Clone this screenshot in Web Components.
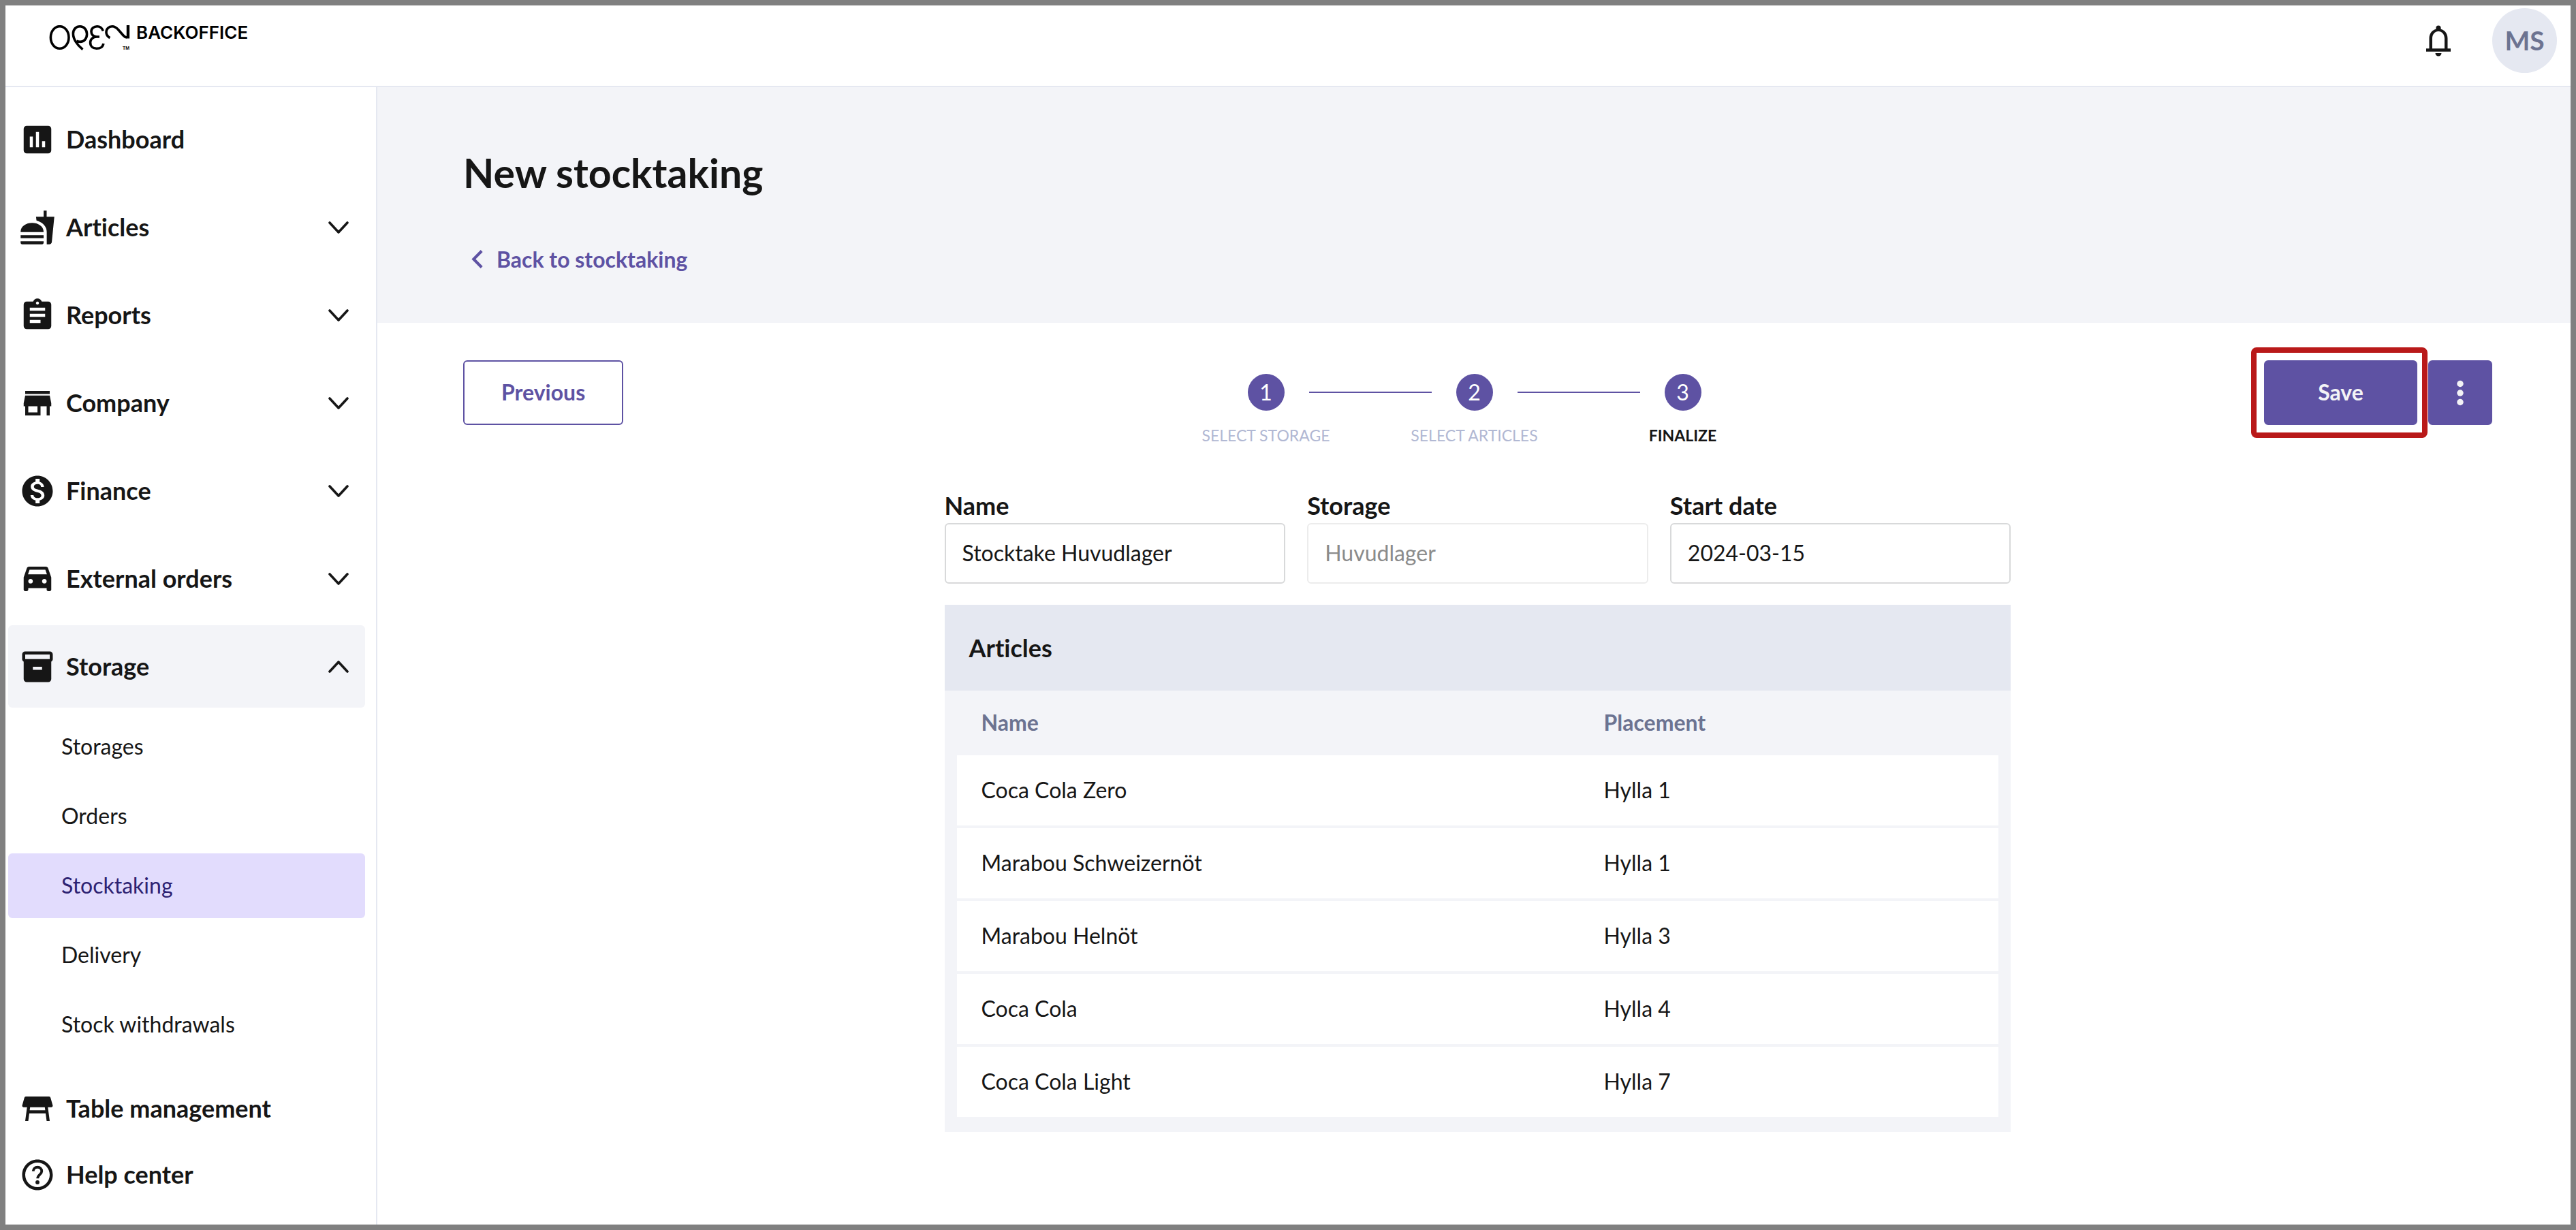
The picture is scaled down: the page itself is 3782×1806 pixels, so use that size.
<!DOCTYPE html>
<html lang="en">
<head>
<meta charset="utf-8">
<meta name="viewport" content="width=device-width, initial-scale=1">
<title>New stocktaking</title>
<style>
  :root {
    --ink: #161616;
    --primary: #5e52a3;
    --primary-dark: #2d2272;
    --primary-soft: #e2dcfd;
    --muted: #6c7391;
    --faint: #b1b8d3;
    --line: #e5e8f1;
    --surface: #f3f4f8;
    --radius: 6px;
  }
  * { box-sizing: border-box; }
  body {
    margin: 0;
    min-height: 100vh;
    display: flex;
    flex-direction: column;
    border: 8px solid #808080;
    background: #fff;
    color: var(--ink);
    font-family: Lato, "Open Sans", sans-serif;
    font-size: 32px;
    line-height: 40px;
    font-variant-ligatures: none;
  }
  .layout { flex: 1; display: flex; }
  main { flex: 1; min-width: 0; }
</style>
</head>
<body>
  <bo-header initials="MS">BACKOFFICE</bo-header>
  <div class="layout">
    <bo-sidebar>
      <bo-nav-item icon="dashboard">Dashboard</bo-nav-item>
      <bo-nav-item icon="articles" group>Articles</bo-nav-item>
      <bo-nav-item icon="reports" group>Reports</bo-nav-item>
      <bo-nav-item icon="company" group>Company</bo-nav-item>
      <bo-nav-item icon="finance" group>Finance</bo-nav-item>
      <bo-nav-item icon="external" group>External orders</bo-nav-item>
      <bo-nav-item icon="storage" group open>Storage</bo-nav-item>
      <bo-sub-item slot="sub">Storages</bo-sub-item>
      <bo-sub-item slot="sub">Orders</bo-sub-item>
      <bo-sub-item slot="sub" current>Stocktaking</bo-sub-item>
      <bo-sub-item slot="sub">Delivery</bo-sub-item>
      <bo-sub-item slot="sub">Stock withdrawals</bo-sub-item>
      <bo-nav-item slot="bottom" icon="table" compact>Table management</bo-nav-item>
      <bo-nav-item slot="bottom" icon="help" compact>Help center</bo-nav-item>
    </bo-sidebar>
    <main>
      <bo-page-title back="Back to stocktaking">New stocktaking</bo-page-title>
      <bo-toolbar>
        <bo-button slot="start" variant="outline">Previous</bo-button>
        <bo-stepper steps="Select storage,Select articles,Finalize" current="3"></bo-stepper>
        <bo-highlight slot="end"><bo-button>Save</bo-button></bo-highlight>
        <bo-button slot="end" variant="icon" label="More options"></bo-button>
      </bo-toolbar>
      <bo-stocktake-form>
        <bo-field label="Name" value="Stocktake Huvudlager"></bo-field>
        <bo-field label="Storage" value="Huvudlager" disabled></bo-field>
        <bo-field label="Start date" value="2024-03-15"></bo-field>
        <bo-article-table slot="table" heading="Articles"></bo-article-table>
      </bo-stocktake-form>
    </main>
  </div>

<script>
const ICONS = {
  dashboard: `<path fill-rule="evenodd" d="M5 3h14a2 2 0 0 1 2 2v14a2 2 0 0 1-2 2H5a2 2 0 0 1-2-2V5a2 2 0 0 1 2-2zM7 10v7h2v-7zM11 7v10h2V7zM15 13v4h2v-4z"/>`,
  articles: `<path d="M18.06 22.99h1.66c.84 0 1.53-.64 1.63-1.46L23 5.05h-5V1h-1.97v4.05h-4.97l.3 2.34c1.71.47 3.31 1.32 4.27 2.26 1.44 1.42 2.43 2.89 2.43 5.29v8.05zM1 21.99V21h15.03v.99c0 .55-.45 1-1.01 1H2.01c-.56 0-1.01-.45-1.01-1zm15.03-7c0-8-15.03-8-15.03 0h15.03zM1.02 17h15v2h-15z"/>`,
  reports: `<path d="M19 3h-4.18C14.4 1.84 13.3 1 12 1c-1.3 0-2.4.84-2.82 2H5c-1.1 0-2 .9-2 2v14c0 1.1.9 2 2 2h14c1.1 0 2-.9 2-2V5c0-1.1-.9-2-2-2zm-7 0c.55 0 1 .45 1 1s-.45 1-1 1-1-.45-1-1 .45-1 1-1zm2 14H7v-2h7v2zm3-4H7v-2h10v2zm0-4H7V7h10v2z"/>`,
  company: `<path d="M20 4H4v2h16V4zm1 10v-2l-1-5H4l-1 5v2h1v6h10v-6h4v6h2v-6h1zm-9 4H6v-4h6v4z"/>`,
  finance: `<path d="M12 2C6.48 2 2 6.48 2 12s4.48 10 10 10 10-4.48 10-10S17.52 2 12 2zm1.41 16.09V20h-2.67v-1.93c-1.71-.36-3.16-1.46-3.27-3.4h1.96c.1 1.05.82 1.87 2.65 1.87 1.96 0 2.4-.98 2.4-1.59 0-.83-.44-1.61-2.67-2.14-2.48-.6-4.18-1.62-4.18-3.67 0-1.72 1.39-2.84 3.11-3.21V4h2.67v1.95c1.86.45 2.79 1.86 2.85 3.39H14.3c-.05-1.11-.64-1.87-2.22-1.87-1.5 0-2.4.68-2.4 1.64 0 .84.65 1.39 2.67 1.91s4.18 1.39 4.18 3.91c-.01 1.83-1.38 2.83-3.12 3.16z"/>`,
  external: `<path d="M18.92 5.01C18.72 4.42 18.16 4 17.5 4h-11c-.66 0-1.21.42-1.42 1.01L3 11v8c0 .55.45 1 1 1h1c.55 0 1-.45 1-1v-1h12v1c0 .55.45 1 1 1h1c.55 0 1-.45 1-1v-8l-2.08-5.99zM7.5 15c-.83 0-1.5-.67-1.5-1.5S6.67 12 7.5 12s1.5.67 1.5 1.5S8.33 15 7.5 15zm9 0c-.83 0-1.5-.67-1.5-1.5s.67-1.5 1.5-1.5 1.5.67 1.5 1.5-.67 1.5-1.5 1.5zM5.81 9l1.04-3h10.29l1.04 3H5.81z"/>`,
  storage: `<path fill-rule="evenodd" d="M4 2h16a2 2 0 0 1 2 2v3.01c0 .72-.43 1.34-1 1.69V20a2 2 0 0 1-2 2H5a2 2 0 0 1-2-2V8.7c-.57-.35-1-.97-1-1.69V4a2 2 0 0 1 2-2zM4 4v3h16V4zM9 12v2h6v-2z"/>`,
  table: `<path d="M21.96 9.73l-1.43-5A1 1 0 0 0 19.57 4H4.43a1 1 0 0 0-.96.73l-1.43 5A1 1 0 0 0 3 11h2.2L4 20h2l.67-5h10.67l.66 5h2l-1.2-9H21a1 1 0 0 0 .96-1.27zM6.93 13l.27-2h9.6l.27 2z"/>`,
  help: `<path d="M12 2C6.48 2 2 6.48 2 12s4.48 10 10 10 10-4.48 10-10S17.52 2 12 2zm0 18c-4.41 0-8-3.59-8-8s3.59-8 8-8 8 3.59 8 8-3.59 8-8 8z"/><circle cx="12" cy="16.9" r="1.3"/><path d="M9.2 9.6A2.8 2.8 0 0 1 12 7a2.7 2.7 0 0 1 2.8 2.7c0 2-2.7 2.3-2.7 4.6" fill="none" stroke="currentColor" stroke-width="1.7"/>`,
};

const svgIcon = (name) => `<svg viewBox="0 0 24 24" width="54" height="54" fill="currentColor" aria-hidden="true">${ICONS[name] || ""}</svg>`;

class BoElement extends HTMLElement {
  connectedCallback() {
    if (this.shadowRoot) return;
    this.attachShadow({ mode: "open" });
    this.shadowRoot.innerHTML = `<style>*{box-sizing:border-box}</style>${this.template()}`;
  }

  attr(name) {
    return this.getAttribute(name) || "";
  }
}

class BoHeader extends BoElement {
  template() {
    return `
      <style>
        :host { display: block; border-bottom: 2px solid var(--line); }
        header { display: flex; align-items: flex-start; justify-content: space-between; height: 118px; padding: 4px 20px 0 64px; }
        .brand { display: flex; gap: 8px; padding-top: 25px; color: #000; text-decoration: none; }
        .brand svg { display: block; }
        .name { font: 600 26px/22px Inter, "Liberation Sans", sans-serif; }
        .actions { display: flex; align-items: center; gap: 52px; }
        button { padding: 0; border: 0; background: none; color: inherit; cursor: pointer; }
        button svg { display: block; }
        .avatar { width: 95px; height: 95px; border-radius: 50%; background: var(--line); color: var(--muted); font: 700 39px/95px Lato, sans-serif; }
      </style>
      <header>
        <a class="brand" href="#">
          <svg width="120" height="38" viewBox="0 0 120 38" fill="none" stroke="currentColor" stroke-width="3.6" role="img" aria-label="Open">
            <ellipse cx="15.7" cy="18" rx="13.3" ry="16.3"/>
            <path d="M49.5 35.6C41 29 35.4 20 35.4 12.5C35.4 5.8 39.8 1.8 45.5 1.8C51.2 1.8 55.6 6.4 55.6 13C55.6 19.8 51.4 24.4 45.6 24.4C43.6 24.4 42 24 40.4 23.2"/>
            <path d="M79.4 8.4C77.8 4.2 74.8 1.8 70.6 1.8C65.6 1.8 62 5 62 9.4C62 13.8 65.2 17 70 17H74M70 17C64.4 17 60.6 20.8 60.6 25.6C60.6 30.8 64.4 34.3 69.8 34.3C75.4 34.3 79.4 31.4 79.8 26.8"/>
            <path d="M89.4 18.6C85.8 16.4 84 13.8 84 10.4C84 5.4 87.8 1.8 92.6 1.8C96.4 1.8 99 3.6 102 7L109 15Q111.6 17.9 114 17.9"/>
            <path d="M116 0V19.5" stroke-width="4.4"/>
            <text x="108" y="36" fill="currentColor" stroke="none" font-family="Liberation Sans" font-weight="700" font-size="7">TM</text>
          </svg>
          <span class="name"><slot></slot></span>
        </a>
        <div class="actions">
          <button type="button" aria-label="Notifications">
            <svg width="54" height="54" viewBox="0 0 24 24" fill="currentColor">
              <path d="M18 17v-6.6c0-3-1.6-5.3-4.4-6.1V3.6a1.6 1.6 0 0 0-3.2 0v.7C7.6 5.1 6 7.4 6 10.4V17H4v2h16v-2zM8 17v-6.6C8 7.8 9.7 5.8 12 5.8s4 2 4 4.6V17zM10 20h4a2 2 0 0 1-4 0z"/>
            </svg>
          </button>
          <button type="button" class="avatar">${this.attr("initials")}</button>
        </div>
      </header>`;
  }
}

class BoSidebar extends BoElement {
  template() {
    return `
      <style>
        :host { display: block; flex: none; width: 546px; border-right: 2px solid var(--line); }
        nav { padding: 16px 16px 0 4px; }
        .main { display: grid; gap: 8px; }
        .sub { display: grid; gap: 7px; padding: 10px 0 27px; }
      </style>
      <nav aria-label="Main">
        <div class="main"><slot></slot></div>
        <div class="sub"><slot name="sub"></slot></div>
        <slot name="bottom"></slot>
      </nav>`;
  }
}

class BoNavItem extends BoElement {
  template() {
    const group = this.hasAttribute("group");
    const open = this.hasAttribute("open");
    const body = `${svgIcon(this.attr("icon"))}<span><slot></slot></span>`;
    const chevron = `
      <svg class="chevron" width="30" height="18" viewBox="0 0 30 18" fill="none" stroke="currentColor" stroke-width="3.6" stroke-linecap="round" stroke-linejoin="round" aria-hidden="true">
        <path d="${open ? "M2 16L15 2L28 16" : "M2 2L15 16L28 2"}"/>
      </svg>`;
    return `
      <style>
        :host { display: block; }
        a, button {
          display: flex; align-items: center; gap: 15px;
          width: 100%; height: 121px; padding: 0 24px 0 16px;
          border: 0; border-radius: var(--radius); background: none;
          color: inherit; font: 700 36px/44px Lato, sans-serif; text-align: left; text-decoration: none; cursor: pointer;
          font-variant-ligatures: none;
        }
        :host([open]) button { background: var(--surface); }
        :host([compact]) a { height: 97px; }
        svg { flex: none; }
        span { flex: 1; padding-bottom: 2px; }
      </style>
      ${group ? `<button type="button" aria-expanded="${open}">${body}${chevron}</button>` : `<a href="#">${body}</a>`}`;
  }
}

class BoSubItem extends BoElement {
  template() {
    return `
      <style>
        :host { display: block; }
        a { display: block; height: 95px; padding-left: 78px; border-radius: var(--radius); color: inherit; line-height: 93px; text-decoration: none; }
        :host([current]) a { background: var(--primary-soft); color: var(--primary-dark); }
      </style>
      <a href="#"><slot></slot></a>`;
  }
}

class BoPageTitle extends BoElement {
  template() {
    return `
      <style>
        :host { display: block; padding: 90px 126px 64px; background: var(--surface); }
        h1 { margin: 0 0 61px; font-size: 59px; font-weight: 700; line-height: 72px; }
        a { display: inline-flex; align-items: center; gap: 20px; height: 59px; padding-left: 12px; color: var(--primary); font-weight: 700; text-decoration: none; }
      </style>
      <h1><slot></slot></h1>
      <a href="#">
        <svg width="17" height="27" viewBox="0 0 17 27" fill="none" stroke="currentColor" stroke-width="4.2" aria-hidden="true"><path d="M15.2 1.5L3.4 13.5L15.2 25.5"/></svg>
        ${this.attr("back")}
      </a>`;
  }
}

class BoButton extends BoElement {
  template() {
    const icon = this.attr("variant") === "icon";
    return `
      <style>
        :host { display: block; }
        button {
          display: block; height: 95px; min-width: 225px; padding: 0 54px 2px;
          border: 2px solid var(--primary); border-radius: var(--radius);
          background: var(--primary); color: #f3f3f6;
          font: 700 32px/40px Lato, sans-serif; cursor: pointer;
        }
        :host([variant="outline"]) button { background: #fff; color: var(--primary); }
        :host([variant="icon"]) button { width: 94px; min-width: 0; padding: 0 18px; }
        svg { display: block; }
      </style>
      ${icon
        ? `<button type="button" aria-label="${this.attr("label")}"><svg width="54" height="54" viewBox="0 0 24 24" fill="currentColor"><circle cx="12" cy="6" r="2.1"/><circle cx="12" cy="12" r="2.1"/><circle cx="12" cy="18" r="2.1"/></svg></button>`
        : `<button type="button"><slot></slot></button>`}`;
  }
}

// Red frame laid over whatever it wraps
class BoHighlight extends BoElement {
  template() {
    return `
      <style>
        :host { display: block; position: relative; }
        :host::after {
          content: ""; position: absolute; inset: -19px -15px -19px -19px;
          border: 8px solid #b91919; border-radius: 8px; pointer-events: none;
        }
      </style>
      <slot></slot>`;
  }
}

class BoToolbar extends BoElement {
  template() {
    return `
      <style>
        :host { display: grid; grid-template-columns: 1fr auto 1fr; align-items: start; padding: 55px 115px 0 126px; }
        .start { justify-self: start; }
        .end { display: flex; gap: 16px; justify-self: end; }
      </style>
      <div class="start"><slot name="start"></slot></div>
      <slot></slot>
      <div class="end"><slot name="end"></slot></div>`;
  }
}

class BoStepper extends BoElement {
  template() {
    const current = Number(this.attr("current"));
    const items = this.attr("steps").split(",").map((label, i) => `
      <li${i + 1 === current ? ' aria-current="step"' : ""}>
        <div class="track"><span class="dot">${i + 1}</span></div>
        <span class="label">${label}</span>
      </li>`).join("");
    return `
      <style>
        :host { display: block; padding: 20px 10px 0 0; }
        ol { display: flex; margin: 0; padding: 0; list-style: none; }
        li { width: 306px; text-align: center; }
        .track { display: grid; grid-template-columns: 1fr 54px 1fr; column-gap: 36px; align-items: center; }
        .track::before, .track::after { content: ""; height: 2px; background: var(--primary); }
        li:first-child .track::before, li:last-child .track::after { background: none; }
        .dot { height: 54px; border-radius: 50%; background: var(--primary); color: #fff; line-height: 54px; }
        .label { display: block; margin-top: 22px; color: var(--faint); font-size: 23px; line-height: 28px; text-transform: uppercase; }
        [aria-current] .label { color: var(--ink); font-weight: 700; }
      </style>
      <ol>${items}</ol>`;
  }
}

class BoStocktakeForm extends BoElement {
  template() {
    return `
      <style>
        :host { display: block; padding: 67px 115px 0 126px; }
        form { display: grid; grid-template-columns: repeat(3, 1fr); column-gap: 32px; row-gap: 31px; max-width: 1566px; margin: 0 auto; }
        .full { grid-column: 1 / -1; }
      </style>
      <form>
        <slot></slot>
        <div class="full"><slot name="table"></slot></div>
      </form>`;
  }
}

class BoField extends BoElement {
  template() {
    return `
      <style>
        :host { display: block; }
        label { display: block; margin-bottom: 4px; font-size: 36px; font-weight: 700; line-height: 44px; }
        input {
          display: block; width: 100%; height: 89px; padding: 0 24px 2px;
          border: 2px solid #d8d9da; border-radius: var(--radius);
          background: #fff; color: var(--ink); font: 32px/40px Lato, sans-serif;
        }
        input:disabled { border-color: #ececec; color: #8b8b8b; }
      </style>
      <label for="control">${this.attr("label")}</label>
      <input id="control" type="text" value="${this.attr("value")}"${this.hasAttribute("disabled") ? " disabled" : ""}>`;
  }
}

const ARTICLES = [
  { name: "Coca Cola Zero", placement: "Hylla 1" },
  { name: "Marabou Schweizernöt", placement: "Hylla 1" },
  { name: "Marabou Helnöt", placement: "Hylla 3" },
  { name: "Coca Cola", placement: "Hylla 4" },
  { name: "Coca Cola Light", placement: "Hylla 7" },
];

class BoArticleTable extends BoElement {
  template() {
    const rows = ARTICLES.map((a) => `<tr><td>${a.name}</td><td>${a.placement}</td></tr>`).join("");
    return `
      <style>
        :host { display: block; padding-bottom: 18px; background: var(--surface); }
        h2 { margin: 0; padding: 41px 36px; background: var(--line); font-size: 36px; font-weight: 700; line-height: 44px; }
        .body { padding: 0 18px; }
        table { width: 100%; border-spacing: 0; table-layout: fixed; }
        th, td { padding: 0 32px 2px; text-align: left; }
        th:first-child, td:first-child { padding-left: 36px; }
        th { height: 95px; color: var(--muted); font-weight: 700; }
        th:first-child { width: 60%; }
        td { height: 107px; border-bottom: 4px solid var(--surface); background: #fff; }
      </style>
      <h2>${this.attr("heading")}</h2>
      <div class="body">
        <table>
          <thead><tr><th scope="col">Name</th><th scope="col">Placement</th></tr></thead>
          <tbody>${rows}</tbody>
        </table>
      </div>`;
  }
}

customElements.define("bo-header", BoHeader);
customElements.define("bo-sidebar", BoSidebar);
customElements.define("bo-nav-item", BoNavItem);
customElements.define("bo-sub-item", BoSubItem);
customElements.define("bo-page-title", BoPageTitle);
customElements.define("bo-button", BoButton);
customElements.define("bo-highlight", BoHighlight);
customElements.define("bo-toolbar", BoToolbar);
customElements.define("bo-stepper", BoStepper);
customElements.define("bo-stocktake-form", BoStocktakeForm);
customElements.define("bo-field", BoField);
customElements.define("bo-article-table", BoArticleTable);
</script>
</body>
</html>
